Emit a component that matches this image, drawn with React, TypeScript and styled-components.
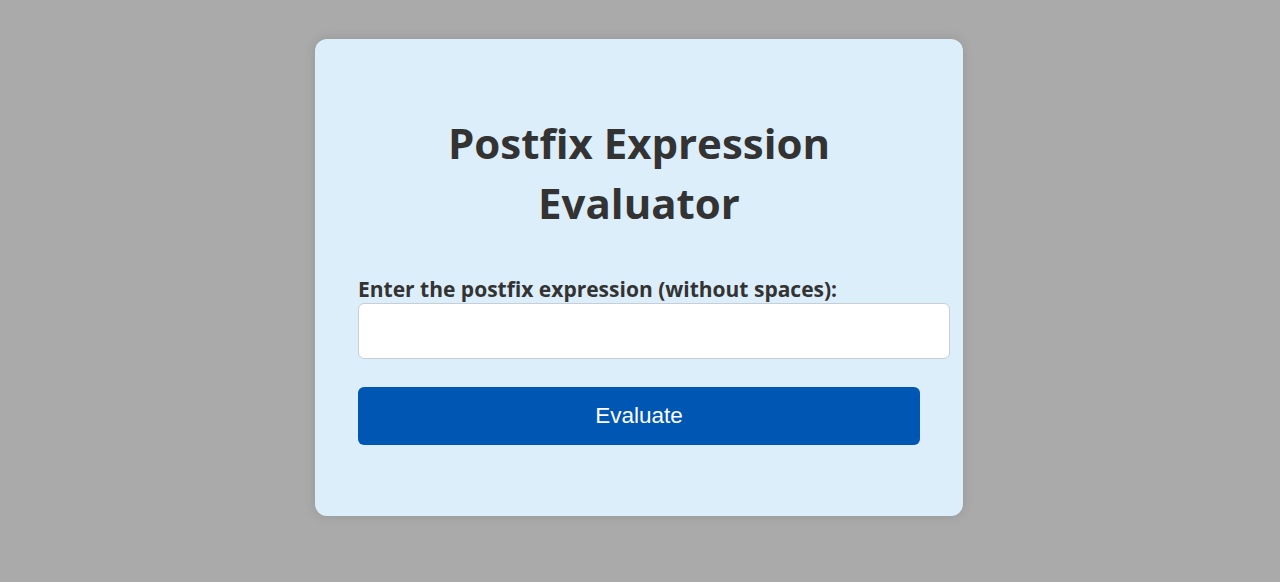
import React from "react";
import styled, { createGlobalStyle } from "styled-components";

const Global = createGlobalStyle`
  html, body { margin: 0; padding: 0; background: #aaaaaa; }
  body { font-family: "Open Sans", "Noto Sans", sans-serif; }
  * { box-sizing: border-box; }
`;

const Page = styled.div`
  display: flex;
  justify-content: center;
  align-items: flex-start;
  padding: 39px 2px 0 0;
  min-height: 582px;
`;

const Card = styled.div`
  width: 648px;
  background: #dceefa;
  border-radius: 12px;
  box-shadow: 0 0 12px rgba(0, 0, 0, 0.12);
  padding: 40px 43px 40px 43px;
  display: flex;
  flex-direction: column;
`;

const Title = styled.h1`
  margin: 34px auto 0;
  width: 430px;
  text-align: center;
  font-size: 42px;
  line-height: 60px;
  font-weight: 700;
  color: #333333;
`;

const Label = styled.label`
  margin-top: 44px;
  font-size: 21px;
  line-height: 24px;
  font-weight: 700;
  color: #333333;
  white-space: nowrap;
`;

const Input = styled.input`
  margin-top: 2px;
  width: 592px;
  height: 56px;
  border: 1px solid #c8ced6;
  border-radius: 6px;
  background: #ffffff;
  padding: 0 14px;
  font-size: 18px;
  outline: none;
`;

const Button = styled.button`
  margin-top: 28px;
  margin-bottom: 31px;
  width: 562px;
  height: 58px;
  border: none;
  border-radius: 6px;
  background: #0056b3;
  color: #ffffff;
  font-family: "Liberation Sans", Arial, sans-serif;
  font-size: 22.5px;
  cursor: pointer;
`;

export default function App() {
  return (
    <>
      <Global />
      <Page>
        <Card>
          <Title>Postfix Expression Evaluator</Title>
          <Label htmlFor="expr">Enter the postfix expression (without spaces):</Label>
          <Input id="expr" type="text" />
          <Button>Evaluate</Button>
        </Card>
      </Page>
    </>
  );
}
